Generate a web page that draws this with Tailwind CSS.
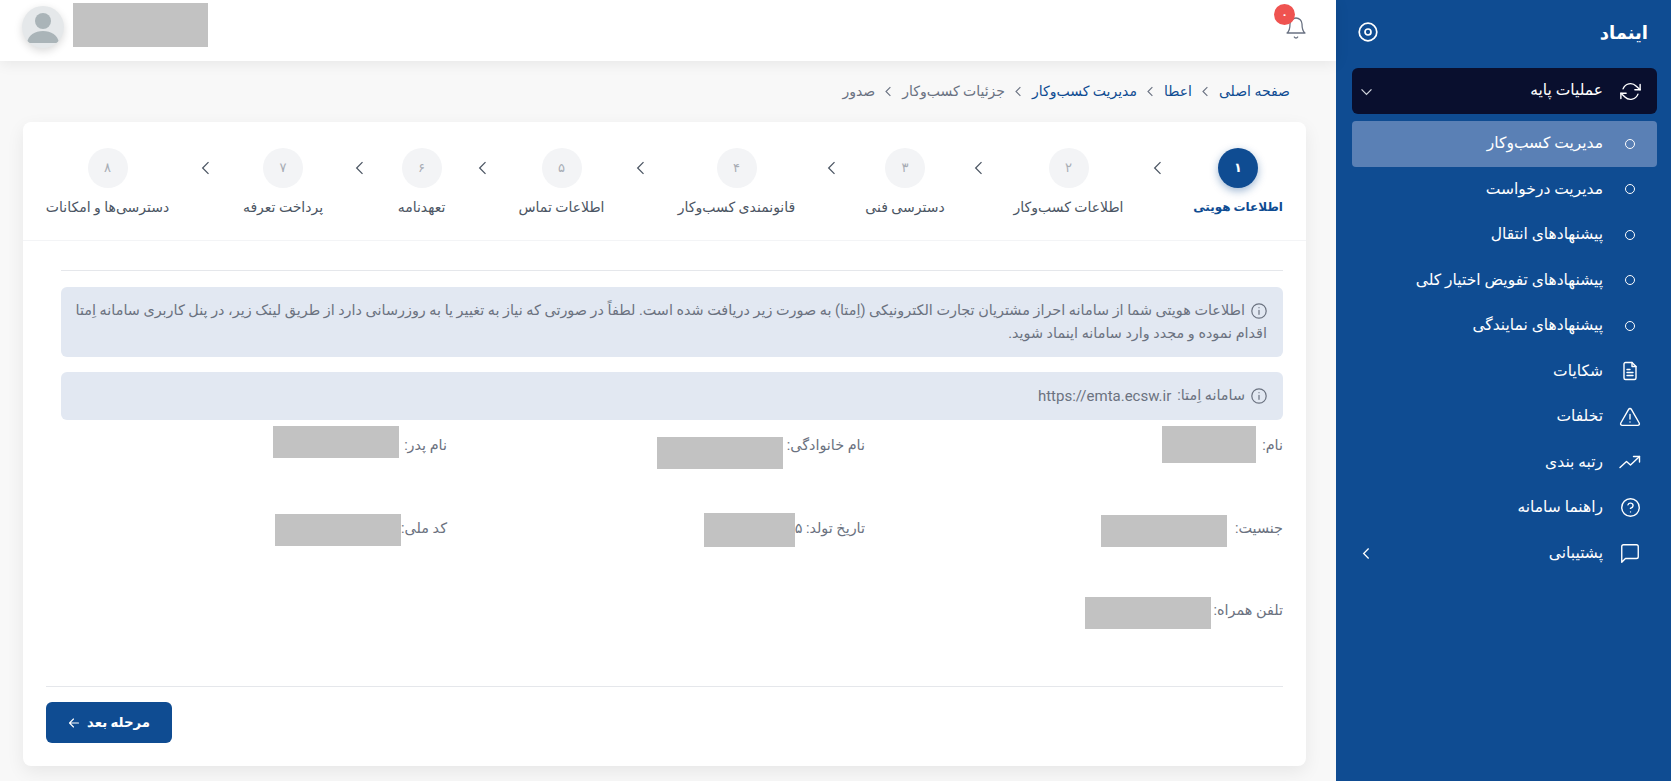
<!DOCTYPE html>
<html lang="fa" dir="rtl">
<head>
  <meta charset="UTF-8">
  <meta name="viewport" content="width=device-width, initial-scale=1.0">
  <title>اینماد</title>
  <script src="https://cdn.jsdelivr.net/npm/@tailwindcss/browser@4"></script>
</head>
<body class="h-screen overflow-hidden flex bg-[#f8f8f8] font-['Roboto','DejaVu_Sans',sans-serif]">

  <!-- sidebar -->
  <aside class="w-[335px] h-full shrink-0 bg-[#0f4c92] text-white pr-[14px] pl-[16px]">
    <div class="h-[64px] mb-[4px] flex items-center justify-between pr-[9px] pl-[6px]">
      <span class="text-[18px] font-bold">اینماد</span>
      <svg class="w-[20px] h-[20px]" viewBox="0 0 20 20" fill="none" stroke="currentColor" stroke-width="1.7"><circle cx="10" cy="10" r="8.8"/><circle cx="10" cy="10" r="3"/></svg>
    </div>

    <div class="h-[46px] rounded-md bg-[#090f2e] flex items-center">
      <span class="w-[54px] flex justify-center">
        <svg class="w-[21px] h-[21px]" viewBox="0 0 24 24" fill="none" stroke="currentColor" stroke-width="1.6" stroke-linecap="round" stroke-linejoin="round"><polyline points="23 4 23 10 17 10"/><polyline points="1 20 1 14 7 14"/><path d="M3.51 9a9 9 0 0 1 14.85-3.36L23 10M1 14l4.64 4.36A9 9 0 0 0 20.49 15"/></svg>
      </span>
      <span class="text-[15.5px]">عملیات پایه</span>
      <svg class="w-[17px] h-[17px] mr-auto ml-[6px] text-gray-300" viewBox="0 0 24 24" fill="none" stroke="currentColor" stroke-width="1.8"><polyline points="5 9 12 16 19 9"/></svg>
    </div>

    <nav class="mt-[7px] text-[15.5px]">
      <a class="h-[45.5px] rounded bg-[#5a80b5] flex items-center"><span class="w-[54px] flex justify-center"><span class="w-[10px] h-[10px] rounded-full border border-white"></span></span>مدیریت کسب‌وکار</a>
      <a class="h-[45.5px] flex items-center"><span class="w-[54px] flex justify-center"><span class="w-[10px] h-[10px] rounded-full border border-white"></span></span>مدیریت درخواست</a>
      <a class="h-[45.5px] flex items-center"><span class="w-[54px] flex justify-center"><span class="w-[10px] h-[10px] rounded-full border border-white"></span></span>پیشنهادهای انتقال</a>
      <a class="h-[45.5px] flex items-center"><span class="w-[54px] flex justify-center"><span class="w-[10px] h-[10px] rounded-full border border-white"></span></span>پیشنهادهای تفویض اختیار کلی</a>
      <a class="h-[45.5px] flex items-center"><span class="w-[54px] flex justify-center"><span class="w-[10px] h-[10px] rounded-full border border-white"></span></span>پیشنهادهای نمایندگی</a>
      <a class="h-[45.5px] flex items-center">
        <span class="w-[54px] flex justify-center">
          <svg class="w-[20px] h-[20px]" viewBox="0 0 20 20" fill="none" stroke="currentColor" stroke-width="1.4" stroke-linecap="round" stroke-linejoin="round"><path d="M12 1.5H5.5a1.5 1.5 0 0 0-1.5 1.5v14a1.5 1.5 0 0 0 1.5 1.5h9a1.5 1.5 0 0 0 1.5-1.5V5.5z"/><path d="M12 1.5v4h4M7 8.5h3M7 11.5h6M7 14.5h6"/></svg>
        </span>شکایات</a>
      <a class="h-[45.5px] flex items-center">
        <span class="w-[54px] flex justify-center">
          <svg class="w-[22px] h-[22px]" viewBox="0 0 22 22" fill="none" stroke="currentColor" stroke-width="1.4" stroke-linecap="round" stroke-linejoin="round"><path d="M9.6 3.4 1.8 17a1.6 1.6 0 0 0 1.4 2.4h15.6a1.6 1.6 0 0 0 1.4-2.4L12.4 3.4a1.6 1.6 0 0 0-2.8 0z"/><path d="M11 8.5v4.5M11 16h.01"/></svg>
        </span>تخلفات</a>
      <a class="h-[45.5px] flex items-center">
        <span class="w-[54px] flex justify-center">
          <svg class="w-[22px] h-[22px]" viewBox="0 0 22 22" fill="none" stroke="currentColor" stroke-width="1.4" stroke-linecap="round" stroke-linejoin="round"><polyline points="1 16.5 7.5 10.5 11.5 14 20.5 5.5"/><polyline points="14.5 5.5 20.5 5.5 20.5 11"/></svg>
        </span>رتبه بندی</a>
      <a class="h-[45.5px] flex items-center">
        <span class="w-[54px] flex justify-center">
          <svg class="w-[21px] h-[21px]" viewBox="0 0 24 24" fill="none" stroke="currentColor" stroke-width="1.6" stroke-linecap="round" stroke-linejoin="round"><circle cx="12" cy="12" r="10"/><path d="M9.09 9a3 3 0 0 1 5.83 1c0 2-3 3-3 3"/><path d="M12 17h.01"/></svg>
        </span>راهنما سامانه</a>
      <a class="h-[45.5px] flex items-center">
        <span class="w-[54px] flex justify-center">
          <svg class="w-[22px] h-[22px]" viewBox="0 0 24 24" fill="none" stroke="currentColor" stroke-width="1.5" stroke-linecap="round" stroke-linejoin="round"><path d="M21 16a2 2 0 0 1-2 2H7l-4 4V5a2 2 0 0 1 2-2h14a2 2 0 0 1 2 2z"/></svg>
        </span>پشتیبانی
        <svg class="w-[17px] h-[17px] mr-auto ml-[6px]" viewBox="0 0 24 24" fill="none" stroke="currentColor" stroke-width="1.8"><polyline points="15 5 8 12 15 19"/></svg>
      </a>
    </nav>
  </aside>

  <!-- main -->
  <main class="flex-1 min-w-0">
    <header class="h-[61px] bg-white shadow-[0_2px_14px_rgba(0,0,0,0.08)] flex justify-between pr-[28px] pl-[22px]">
      <div class="relative w-[24px] h-[24px] mt-[16px] text-gray-500">
        <svg class="w-[24px] h-[24px]" viewBox="0 0 24 24" fill="none" stroke="currentColor" stroke-width="1.3" stroke-linecap="round" stroke-linejoin="round"><path d="M18 8A6 6 0 0 0 6 8c0 7-3 9-3 9h18s-3-2-3-9"/><path d="M13.73 21a2 2 0 0 1-3.46 0"/></svg>
        <span class="absolute -top-[12px] -left-[10px] w-[21px] h-[21px] rounded-full bg-[#ef5350] text-white text-[10px] font-bold flex items-center justify-center">۰</span>
      </div>
      <div class="flex items-start">
        <div class="w-[135px] h-[44px] mt-[3px] ml-[9px] bg-[#c2c2c2]"></div>
        <div class="w-[42px] h-[42px] mt-[6px] rounded-full bg-[#e5e8ea] shadow-[0_3px_8px_rgba(0,0,0,0.15)] overflow-hidden">
          <svg class="w-[42px] h-[42px]" viewBox="0 0 42 42" fill="#aab4b8"><circle cx="21" cy="15" r="8"/><path d="M5 37c1-8 8-12 16-12s15 4 16 12z"/></svg>
        </div>
      </div>
    </header>

    <!-- breadcrumb -->
    <div class="h-[61px] pb-[1px] pr-[46px] flex items-center text-[14px] text-gray-500">
      <a class="text-[#0f4c92]">صفحه اصلی</a>
      <svg class="w-[15px] h-[15px] mx-[6px]" viewBox="0 0 24 24" fill="none" stroke="currentColor" stroke-width="1.8"><polyline points="15 5 8 12 15 19"/></svg>
      <a class="text-[#0f4c92]">اعطا</a>
      <svg class="w-[15px] h-[15px] mx-[6px]" viewBox="0 0 24 24" fill="none" stroke="currentColor" stroke-width="1.8"><polyline points="15 5 8 12 15 19"/></svg>
      <a class="text-[#0f4c92]">مدیریت کسب‌وکار</a>
      <svg class="w-[15px] h-[15px] mx-[6px]" viewBox="0 0 24 24" fill="none" stroke="currentColor" stroke-width="1.8"><polyline points="15 5 8 12 15 19"/></svg>
      <span>جزئیات کسب‌وکار</span>
      <svg class="w-[15px] h-[15px] mx-[6px]" viewBox="0 0 24 24" fill="none" stroke="currentColor" stroke-width="1.8"><polyline points="15 5 8 12 15 19"/></svg>
      <span>صدور</span>
    </div>

    <!-- card -->
    <section class="h-[644px] mr-[30px] ml-[23px] bg-white rounded-lg shadow-[0_6px_18px_rgba(0,0,0,0.07)]">
      <!-- stepper -->
      <div class="h-[119px] border-b border-gray-100 pt-[26px] pr-[24px] flex items-start text-[14px] text-[#4b5563] whitespace-nowrap">
        <div class="w-[88px] flex flex-col items-center">
          <span class="w-[40px] h-[40px] rounded-full bg-[#0f4c92] text-white font-bold text-[13px] flex items-center justify-center shadow-[0_3px_8px_rgba(15,76,146,0.4)]">۱</span>
          <span class="mt-[9px] leading-[20px] text-[#0f4c92] font-bold text-[12px]">اطلاعات هویتی</span>
        </div>
        <span class="w-[72px] h-[40px] flex items-center justify-center"><svg class="w-[20px] h-[20px]" viewBox="0 0 24 24" fill="none" stroke="#4b5563" stroke-width="1.5"><polyline points="15 5 8 12 15 19"/></svg></span>
        <div class="w-[107px] flex flex-col items-center">
          <span class="w-[40px] h-[40px] rounded-full bg-[#f3f4f6] text-[#a8adb5] text-[13px] flex items-center justify-center">۲</span>
          <span class="mt-[9px] leading-[20px]">اطلاعات کسب‌وکار</span>
        </div>
        <span class="w-[72px] h-[40px] flex items-center justify-center"><svg class="w-[20px] h-[20px]" viewBox="0 0 24 24" fill="none" stroke="#4b5563" stroke-width="1.5"><polyline points="15 5 8 12 15 19"/></svg></span>
        <div class="w-[76px] flex flex-col items-center">
          <span class="w-[40px] h-[40px] rounded-full bg-[#f3f4f6] text-[#a8adb5] text-[13px] flex items-center justify-center">۳</span>
          <span class="mt-[9px] leading-[20px]">دسترسی فنی</span>
        </div>
        <span class="w-[71px] h-[40px] flex items-center justify-center"><svg class="w-[20px] h-[20px]" viewBox="0 0 24 24" fill="none" stroke="#4b5563" stroke-width="1.5"><polyline points="15 5 8 12 15 19"/></svg></span>
        <div class="w-[119px] flex flex-col items-center">
          <span class="w-[40px] h-[40px] rounded-full bg-[#f3f4f6] text-[#a8adb5] text-[13px] flex items-center justify-center">۴</span>
          <span class="mt-[9px] leading-[20px]">قانونمندی کسب‌وکار</span>
        </div>
        <span class="w-[72px] h-[40px] flex items-center justify-center"><svg class="w-[20px] h-[20px]" viewBox="0 0 24 24" fill="none" stroke="#4b5563" stroke-width="1.5"><polyline points="15 5 8 12 15 19"/></svg></span>
        <div class="w-[87px] flex flex-col items-center">
          <span class="w-[40px] h-[40px] rounded-full bg-[#f3f4f6] text-[#a8adb5] text-[13px] flex items-center justify-center">۵</span>
          <span class="mt-[9px] leading-[20px]">اطلاعات تماس</span>
        </div>
        <span class="w-[71px] h-[40px] flex items-center justify-center"><svg class="w-[20px] h-[20px]" viewBox="0 0 24 24" fill="none" stroke="#4b5563" stroke-width="1.5"><polyline points="15 5 8 12 15 19"/></svg></span>
        <div class="w-[51px] flex flex-col items-center">
          <span class="w-[40px] h-[40px] rounded-full bg-[#f3f4f6] text-[#a8adb5] text-[13px] flex items-center justify-center">۶</span>
          <span class="mt-[9px] leading-[20px]">تعهدنامه</span>
        </div>
        <span class="w-[72px] h-[40px] flex items-center justify-center"><svg class="w-[20px] h-[20px]" viewBox="0 0 24 24" fill="none" stroke="#4b5563" stroke-width="1.5"><polyline points="15 5 8 12 15 19"/></svg></span>
        <div class="w-[82px] flex flex-col items-center">
          <span class="w-[40px] h-[40px] rounded-full bg-[#f3f4f6] text-[#a8adb5] text-[13px] flex items-center justify-center">۷</span>
          <span class="mt-[9px] leading-[20px]">پرداخت تعرفه</span>
        </div>
        <span class="w-[72px] h-[40px] flex items-center justify-center"><svg class="w-[20px] h-[20px]" viewBox="0 0 24 24" fill="none" stroke="#4b5563" stroke-width="1.5"><polyline points="15 5 8 12 15 19"/></svg></span>
        <div class="w-[125px] flex flex-col items-center">
          <span class="w-[40px] h-[40px] rounded-full bg-[#f3f4f6] text-[#a8adb5] text-[13px] flex items-center justify-center">۸</span>
          <span class="mt-[9px] leading-[20px]">دسترسی‌ها و امکانات</span>
        </div>
      </div>

      <!-- body -->
      <div class="mt-[29px] mr-[23px] ml-[38px] border-t border-gray-200 pt-[16px] text-[#6b7280] text-[14.4px]">
        <div class="h-[70px] rounded-md bg-[#e2e8f2] px-[16px] flex flex-col justify-center whitespace-nowrap leading-[23px]">
          <div class="flex items-center gap-[6px]">
            <svg class="w-[16px] h-[16px] shrink-0" viewBox="0 0 16 16" fill="none" stroke="currentColor" stroke-width="1.2" stroke-linecap="round"><circle cx="8" cy="8" r="7.2"/><path d="M8 7.3v4M8 4.7h.01"/></svg>
            <span>اطلاعات هویتی شما از سامانه احراز مشتریان تجارت الکترونیکی (اِمتا) به صورت زیر دریافت شده است. لطفاً در صورتی که نیاز به تغییر یا به روزرسانی دارد از طریق لینک زیر، در پنل کاربری سامانه اِمتا</span>
          </div>
          <div>اقدام نموده و مجدد وارد سامانه اینماد شوید.</div>
        </div>
        <div class="h-[48px] mt-[15px] rounded-md bg-[#e2e8f2] px-[16px] flex items-center gap-[6px] whitespace-nowrap">
          <svg class="w-[16px] h-[16px] shrink-0" viewBox="0 0 16 16" fill="none" stroke="currentColor" stroke-width="1.2" stroke-linecap="round"><circle cx="8" cy="8" r="7.2"/><path d="M8 7.3v4M8 4.7h.01"/></svg>
          <span>سامانه اِمتا:</span><span class="text-[15px]">https://emta.ecsw.ir</span>
        </div>

        <!-- fields -->
        <div class="h-[266px] grid grid-cols-[418px_418px_386px] grid-rows-[83px_82px_82px] whitespace-nowrap leading-[24px]">
          <div class="flex items-start">
            <span class="w-[22px] mt-[14px]">نام:</span>
            <span class="w-[94px] h-[37px] mt-[6px] mr-[5px] bg-[#c2c2c2]"></span>
          </div>
          <div class="flex items-start">
            <span class="w-[78px] mt-[14px]">نام خانوادگی:</span>
            <span class="w-[126px] h-[32px] mt-[17px] mr-[4px] bg-[#c2c2c2]"></span>
          </div>
          <div class="flex items-start">
            <span class="w-[43px] mt-[14px]">نام پدر:</span>
            <span class="w-[126px] h-[32px] mt-[6px] mr-[5px] bg-[#c2c2c2]"></span>
          </div>
          <div class="flex items-start">
            <span class="w-[51px] mt-[14px]">جنسیت:</span>
            <span class="w-[126px] h-[32px] mt-[12px] mr-[5px] bg-[#c2c2c2]"></span>
          </div>
          <div class="flex items-start">
            <span class="w-[70px] mt-[14px]">تاریخ تولد: ۵</span>
            <span class="w-[91px] h-[34px] mt-[10px] bg-[#c2c2c2]"></span>
          </div>
          <div class="flex items-start">
            <span class="w-[46px] mt-[14px]">کد ملی:</span>
            <span class="w-[126px] h-[32px] mt-[11px] bg-[#c2c2c2]"></span>
          </div>
          <div class="flex items-start">
            <span class="w-[72px] mt-[14px]">تلفن همراه:</span>
            <span class="w-[126px] h-[32px] mt-[12px] bg-[#c2c2c2]"></span>
          </div>
        </div>
      </div>

      <!-- footer -->
      <div class="mx-[23px] border-t border-gray-200 pt-[15px]">
        <button class="w-[126px] h-[41px] mr-auto rounded-md bg-[#0f4c92] text-white text-[13.3px] font-bold flex items-center justify-center gap-[7px]">
          مرحله بعد
          <svg class="w-[12px] h-[12px]" viewBox="0 0 24 24" fill="none" stroke="currentColor" stroke-width="2.2" stroke-linecap="round" stroke-linejoin="round"><path d="M21 12H4M11 4l-8 8 8 8"/></svg>
        </button>
      </div>
    </section>
  </main>

</body>
</html>
